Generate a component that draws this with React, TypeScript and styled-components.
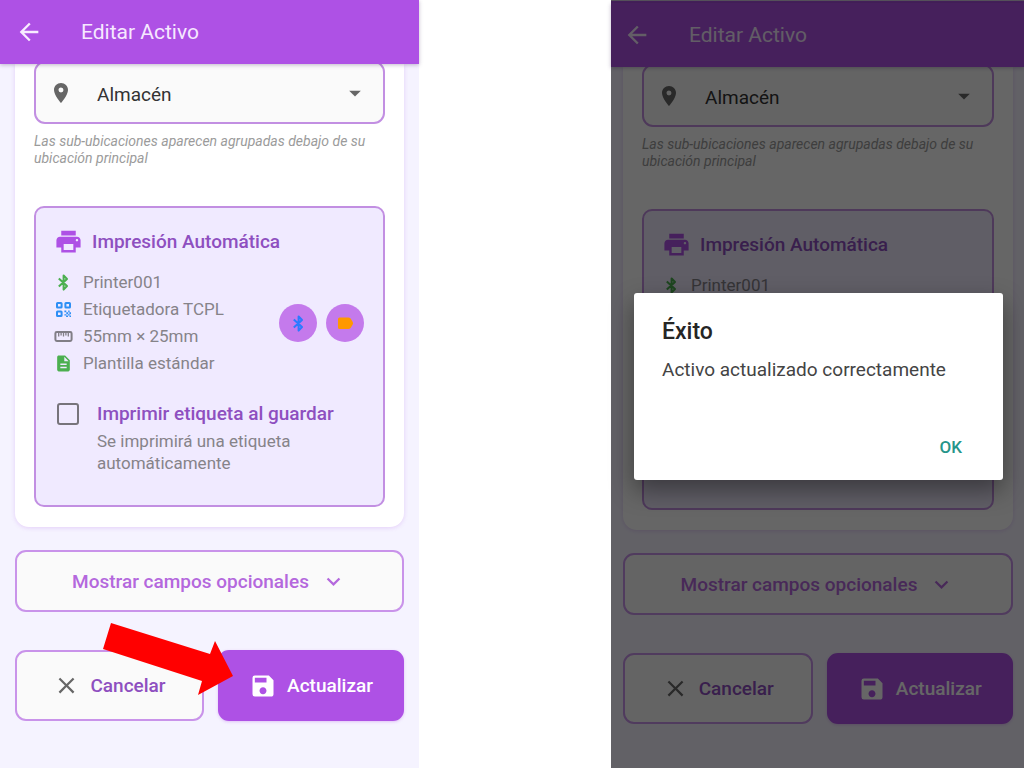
import React, { useId } from 'react';
import styled, { createGlobalStyle } from 'styled-components';
import {
  MdArrowBack,
  MdArrowDropDown,
  MdClose,
  MdDescription,
  MdExpandMore,
  MdPlace,
  MdPrint,
  MdSave,
} from 'react-icons/md';

const GlobalStyle = createGlobalStyle`
  *, *::before, *::after { box-sizing: border-box; }
  body { margin: 0; background: #fff; font-family: Roboto, "Liberation Sans", sans-serif; }
  button, select, input { font-family: inherit; }
  h1, h2, p, ul { margin: 0; padding: 0; }
  svg { display: block; flex: none; }
`;

const Page = styled.div`
  display: grid;
  grid-template-columns: 419fr 192fr 413fr;
  min-height: 100vh;
`;

const Phone = styled.section<{ $column: number; $start: number; $end: number }>`
  --start: ${(p) => p.$start}px;
  --end: ${(p) => p.$end}px;
  grid-column: ${(p) => p.$column};
  position: relative;
  display: flex;
  flex-direction: column;
  min-width: 0;
  background: #f5f3ff;
`;

const StatusEdge = styled.div`
  height: 3px;
  background: #ae51e5;
  border-top: 1px solid #d8cbe2;
`;

const Header = styled.header`
  position: relative;
  z-index: 1;
  display: flex;
  align-items: center;
  gap: 38px;
  height: 64px;
  padding-left: var(--start);
  background: #ae51e5;
  box-shadow: 0 1px 4px rgba(60, 30, 90, 0.3);
`;

const BackButton = styled.button`
  display: flex;
  padding: 0;
  border: 0;
  background: none;
  color: #f8ecff;
`;

const ScreenTitle = styled.h1`
  color: #f6e8ff;
  font-size: 21px;
  font-weight: 400;
  line-height: 28px;
`;

const Content = styled.main`
  display: flow-root;
  flex: 1;
  overflow: hidden;
  padding: 0 var(--end) 44px var(--start);
`;

const Card = styled.div`
  display: flow-root;
  padding: 0 19px 20px;
  border-radius: 0 0 14px 14px;
  background: #fff;
  box-shadow: 0 1px 4px rgba(174, 81, 229, 0.22);
`;

const SelectField = styled.div`
  display: flex;
  align-items: center;
  height: 63px;
  margin-top: -3px;
  padding: 0 14px 0 13px;
  border: 2px solid #c28fe2;
  border-radius: 11px;
  background: #fafafa;
  color: #666;
`;

const Select = styled.select`
  flex: 1;
  min-width: 0;
  margin-left: 24px;
  padding: 5px 0 0;
  border: 0;
  appearance: none;
  background: transparent;
  color: #333;
  font-size: 19px;
  line-height: 24px;
`;

const Hint = styled.p`
  margin: 9px 0 39px;
  color: #9b9b9b;
  font-size: 14px;
  font-style: italic;
  line-height: 17px;
`;

const Panel = styled.div`
  padding: 19px 19px 31px 18px;
  border: 2px solid #c28fe2;
  border-radius: 10px;
  background: #f0eaff;
`;

const PanelTitle = styled.h2`
  display: flex;
  align-items: center;
  gap: 9px;
  margin-bottom: 17px;
  color: #8e4fc0;
  font-size: 19px;
  font-weight: 500;
  line-height: 28px;
  svg { color: #ae51e5; }
`;

const PrinterRow = styled.div`
  display: flex;
  align-items: center;
  justify-content: space-between;
`;

const Specs = styled.ul`
  display: flex;
  flex-direction: column;
  gap: 8px;
  list-style: none;
`;

const Spec = styled.li<{ $tint: string }>`
  display: flex;
  align-items: center;
  gap: 10px;
  color: #868389;
  font-size: 17px;
  line-height: 19px;
  svg { color: ${(p) => p.$tint}; }
`;

const RoundActions = styled.div`
  display: flex;
  gap: 9px;
`;

const RoundButton = styled.button<{ $tint: string }>`
  display: grid;
  place-items: center;
  width: 38px;
  height: 38px;
  padding: 0;
  border: 0;
  border-radius: 50%;
  background: #c47aec;
  color: ${(p) => p.$tint};
`;

const PrintOption = styled.div`
  display: grid;
  grid-template-columns: 22px 1fr;
  column-gap: 18px;
  row-gap: 5px;
  margin: 30px 0 0 3px;
`;

const Checkbox = styled.input`
  width: 22px;
  height: 22px;
  margin: 0;
  border: 2px solid #77747b;
  border-radius: 3px;
  appearance: none;
  background: transparent;
`;

const OptionLabel = styled.label`
  color: #8e4fc0;
  font-size: 19px;
  font-weight: 500;
  line-height: 22px;
`;

const OptionNote = styled.p`
  grid-column: 2;
  max-width: 220px;
  color: #868389;
  font-size: 17px;
  line-height: 22px;
`;

const OutlineButton = styled.button<{ $height: number; $gap: number; $tone: string }>`
  display: flex;
  align-items: center;
  justify-content: center;
  gap: ${(p) => p.$gap}px;
  width: 100%;
  height: ${(p) => p.$height}px;
  padding: 0;
  border: 2px solid #c993ea;
  border-radius: 11px;
  background: #fafafa;
  color: ${(p) => p.$tone};
  font-size: 19px;
  font-weight: 500;
`;

const PrimaryButton = styled(OutlineButton)`
  border-color: #ae51e5;
  background: #ae51e5;
  box-shadow: 0 1px 3px rgba(174, 81, 229, 0.3);
`;

const OptionalFields = styled.div`
  margin: 23px 0 38px;
`;

const Actions = styled.div`
  position: relative;
  display: grid;
  grid-template-columns: 189fr 186fr;
  gap: 14px;
`;

const Pointer = styled.svg`
  position: absolute;
  top: -27px;
  left: 88px;
`;

const Overlay = styled.div`
  position: absolute;
  inset: 0;
  z-index: 2;
  display: flex;
  align-items: center;
  padding: 5px 21px 0 23px;
  background: rgba(0, 0, 0, 0.6);
`;

const Dialog = styled.div`
  display: flex;
  flex-direction: column;
  width: 100%;
  padding: 25px 28px 21px;
  border-radius: 3px;
  background: #fff;
  box-shadow: 0 10px 24px rgba(0, 0, 0, 0.4);
`;

const DialogTitle = styled.h2`
  color: #252525;
  font-size: 23px;
  font-weight: 500;
  line-height: 28px;
`;

const DialogText = styled.p`
  margin: 12px 0 53px;
  color: #444;
  font-size: 19px;
  line-height: 24px;
`;

const DialogButton = styled.button`
  align-self: flex-end;
  margin-right: 13px;
  padding: 0;
  border: 0;
  background: none;
  color: #26958a;
  font-size: 17px;
  font-weight: 500;
  line-height: 24px;
`;

function BluetoothIcon() {
  return (
    <svg width="19" height="19" viewBox="0 0 19 19" fill="none" stroke="currentColor" strokeWidth="2" strokeLinejoin="round">
      <path d="M4.8 5.4l8.2 7.6-3.4 3.6V2.4L13 6l-8.2 7.6" />
    </svg>
  );
}

function QrIcon() {
  return (
    <svg width="19" height="19" viewBox="0 0 19 19" fill="none" stroke="currentColor" strokeWidth="2">
      <rect x="3" y="3" width="4.6" height="4.6" rx="0.6" />
      <rect x="11.4" y="3" width="4.6" height="4.6" rx="0.6" />
      <rect x="3" y="11.4" width="4.6" height="4.6" rx="0.6" />
      <path
        stroke="none"
        fill="currentColor"
        d="M10.4 10.4h1.9v1.9h-1.9zM14.2 10.4h1.4v1.9h-1.4zM12.3 12.3h1.9v1.9h-1.9zM15.4 12.3h1.6v1.9h-1.6zM10.4 14.2h1.9v1.4h-1.9zM14 14.2h1.6v1.4H14zM12.1 15.4H14V17h-1.9zM15.5 15.4H17V17h-1.5z"
      />
    </svg>
  );
}

function RulerIcon() {
  return (
    <svg width="19" height="19" viewBox="0 0 19 19" fill="none" stroke="currentColor" strokeWidth="2">
      <rect x="1.4" y="5" width="16.2" height="9" rx="1.4" />
      <path strokeWidth="1.3" d="M4.7 5.5v4M7.1 5.5v3M9.5 5.5v4M11.9 5.5v3M14.3 5.5v4" />
    </svg>
  );
}

function TagIcon() {
  return (
    <svg width="19" height="19" viewBox="0 0 19 19" fill="currentColor">
      <path d="M3.6 3.6h8.7q1.4 0 2.3 1l2 3.2q1 1.5 0 3l-2 3.2q-.9 1-2.3 1H3.6q-1.6 0-1.6-1.6V5.2q0-1.6 1.6-1.6z" />
    </svg>
  );
}

function EditForm({ pointer }: { pointer?: boolean }) {
  const id = useId();
  return (
    <>
      <Header>
        <BackButton type="button" aria-label="Volver">
          <MdArrowBack size={28} />
        </BackButton>
        <ScreenTitle>Editar Activo</ScreenTitle>
      </Header>
      <Content>
        <Card>
          <SelectField>
            <MdPlace size={24} />
            <Select id={`${id}-place`} aria-label="Ubicación" defaultValue="almacen">
              <option value="almacen">Almacén</option>
            </Select>
            <MdArrowDropDown size={28} />
          </SelectField>
          <Hint>Las sub-ubicaciones aparecen agrupadas debajo de su ubicación principal</Hint>
          <Panel>
            <PanelTitle>
              <MdPrint size={29} />
              Impresión Automática
            </PanelTitle>
            <PrinterRow>
              <Specs>
                <Spec $tint="#4caf50"><BluetoothIcon />Printer001</Spec>
                <Spec $tint="#2e8ff5"><QrIcon />Etiquetadora TCPL</Spec>
                <Spec $tint="#817e86"><RulerIcon />55mm × 25mm</Spec>
                <Spec $tint="#4caf50"><MdDescription size={19} />Plantilla estándar</Spec>
              </Specs>
              <RoundActions>
                <RoundButton type="button" $tint="#2a7bff" aria-label="Bluetooth">
                  <BluetoothIcon />
                </RoundButton>
                <RoundButton type="button" $tint="#ff9800" aria-label="Etiqueta">
                  <TagIcon />
                </RoundButton>
              </RoundActions>
            </PrinterRow>
            <PrintOption>
              <Checkbox type="checkbox" id={`${id}-print`} />
              <OptionLabel htmlFor={`${id}-print`}>Imprimir etiqueta al guardar</OptionLabel>
              <OptionNote>Se imprimirá una etiqueta automáticamente</OptionNote>
            </PrintOption>
          </Panel>
        </Card>
        <OptionalFields>
          <OutlineButton type="button" $height={62} $gap={11} $tone="#b468dd">
            Mostrar campos opcionales
            <MdExpandMore size={27} />
          </OutlineButton>
        </OptionalFields>
        <Actions>
          <OutlineButton type="button" $height={71} $gap={10} $tone="#8e4fc0">
            <MdClose size={27} color="#666" />
            Cancelar
          </OutlineButton>
          <PrimaryButton type="button" $height={71} $gap={10} $tone="#fff">
            <MdSave size={28} />
            Actualizar
          </PrimaryButton>
          {pointer && (
            <Pointer width="130" height="72" viewBox="0 0 130 72" aria-hidden="true">
              <polygon fill="#f00" points="8,0 107,31 112,18 130,53 95,72 99,58 0,26" />
            </Pointer>
          )}
        </Actions>
      </Content>
    </>
  );
}

export default function App() {
  return (
    <>
      <GlobalStyle />
      <Page>
        <Phone $column={1} $start={15} $end={15}>
          <EditForm pointer />
        </Phone>
        <Phone $column={3} $start={12} $end={11}>
          <StatusEdge />
          <EditForm />
          <Overlay>
            <Dialog role="alertdialog" aria-labelledby="result-title" aria-describedby="result-text">
              <DialogTitle id="result-title">Éxito</DialogTitle>
              <DialogText id="result-text">Activo actualizado correctamente</DialogText>
              <DialogButton type="button">OK</DialogButton>
            </Dialog>
          </Overlay>
        </Phone>
      </Page>
    </>
  );
}
